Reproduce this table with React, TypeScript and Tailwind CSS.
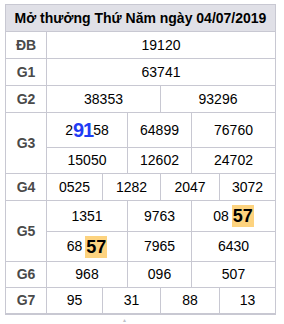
import React from "react";

const cell = "flex items-center justify-center text-[14px] text-black";
const label = "w-[41px] shrink-0 flex items-center justify-center border-r border-[#c8c8d2] text-[14px] font-bold text-[#4a4a4a]";

function Hl({ v }: { v: string }) {
  return (
    <span className="ml-[3px] inline-block bg-[#fdd37f] px-[1px] text-[18px] font-bold leading-[22px] text-black">
      {v}
    </span>
  );
}

function Row({ name, h, cols, items }: { name: string; h: string; cols: string; items: React.ReactNode[] }) {
  return (
    <div className={`flex border-t border-[#c8c8d2] ${h}`}>
      <div className={label}>{name}</div>
      <div className={`grid flex-1 divide-x divide-[#c8c8d2] ${cols}`}>
        {items.map((it, i) => (
          <div key={i} className={cell}>{it}</div>
        ))}
      </div>
    </div>
  );
}

export default function App() {
  return (
    <div className="h-[324px] w-[284px] overflow-hidden bg-white pt-[4px] font-['Liberation_Sans',Arial,sans-serif]">
      <div className="ml-[5px] w-[271px] border border-b-2 border-[#c8c8d2]">
        <div className="flex h-[26px] items-center justify-center bg-[#e0e0e7] text-[14px] font-bold text-black">
          Mở thưởng Thứ Năm ngày 04/07/2019
        </div>
        <Row name="ĐB" h="h-[27px]" cols="grid-cols-1" items={["19120"]} />
        <Row name="G1" h="h-[27px]" cols="grid-cols-1" items={["63741"]} />
        <Row name="G2" h="h-[27px]" cols="grid-cols-[114px_1fr]" items={["38353", "93296"]} />
        <div className="flex border-t border-[#c8c8d2]">
          <div className={label}>G3</div>
          <div className="flex flex-1 flex-col">
            <div className="grid h-[34px] grid-cols-[81px_64px_1fr] divide-x divide-[#c8c8d2]">
              <div className={cell}>
                <span>2</span>
                <span className="text-[20px] font-bold tracking-[-1px] text-[#1f3cf5]">91</span>
                <span>58</span>
              </div>
              <div className={cell}>64899</div>
              <div className={cell}>76760</div>
            </div>
            <div className="grid h-[26px] grid-cols-[81px_64px_1fr] divide-x divide-[#c8c8d2] border-t border-[#c8c8d2]">
              <div className={cell}>15050</div>
              <div className={cell}>12602</div>
              <div className={cell}>24702</div>
            </div>
          </div>
        </div>
        <Row name="G4" h="h-[27px]" cols="grid-cols-[56px_58px_59px_1fr]" items={["0525", "1282", "2047", "3072"]} />
        <div className="flex border-t border-[#c8c8d2]">
          <div className={label}>G5</div>
          <div className="flex flex-1 flex-col">
            <div className="grid h-[30px] grid-cols-[81px_64px_1fr] divide-x divide-[#c8c8d2]">
              <div className={cell}>1351</div>
              <div className={cell}>9763</div>
              <div className={cell}>08<Hl v="57" /></div>
            </div>
            <div className="grid h-[30px] grid-cols-[81px_64px_1fr] divide-x divide-[#c8c8d2] border-t border-[#c8c8d2]">
              <div className={cell}>68<Hl v="57" /></div>
              <div className={cell}>7965</div>
              <div className={cell}>6430</div>
            </div>
          </div>
        </div>
        <Row name="G6" h="h-[26px]" cols="grid-cols-[81px_64px_1fr]" items={["968", "096", "507"]} />
        <Row name="G7" h="h-[26px]" cols="grid-cols-[56px_58px_59px_1fr]" items={["95", "31", "88", "13"]} />
      </div>
      <div className="ml-[122px] mt-[2px] text-[5px] leading-[6px] text-[#c0c0c8]">▲</div>
    </div>
  );
}
